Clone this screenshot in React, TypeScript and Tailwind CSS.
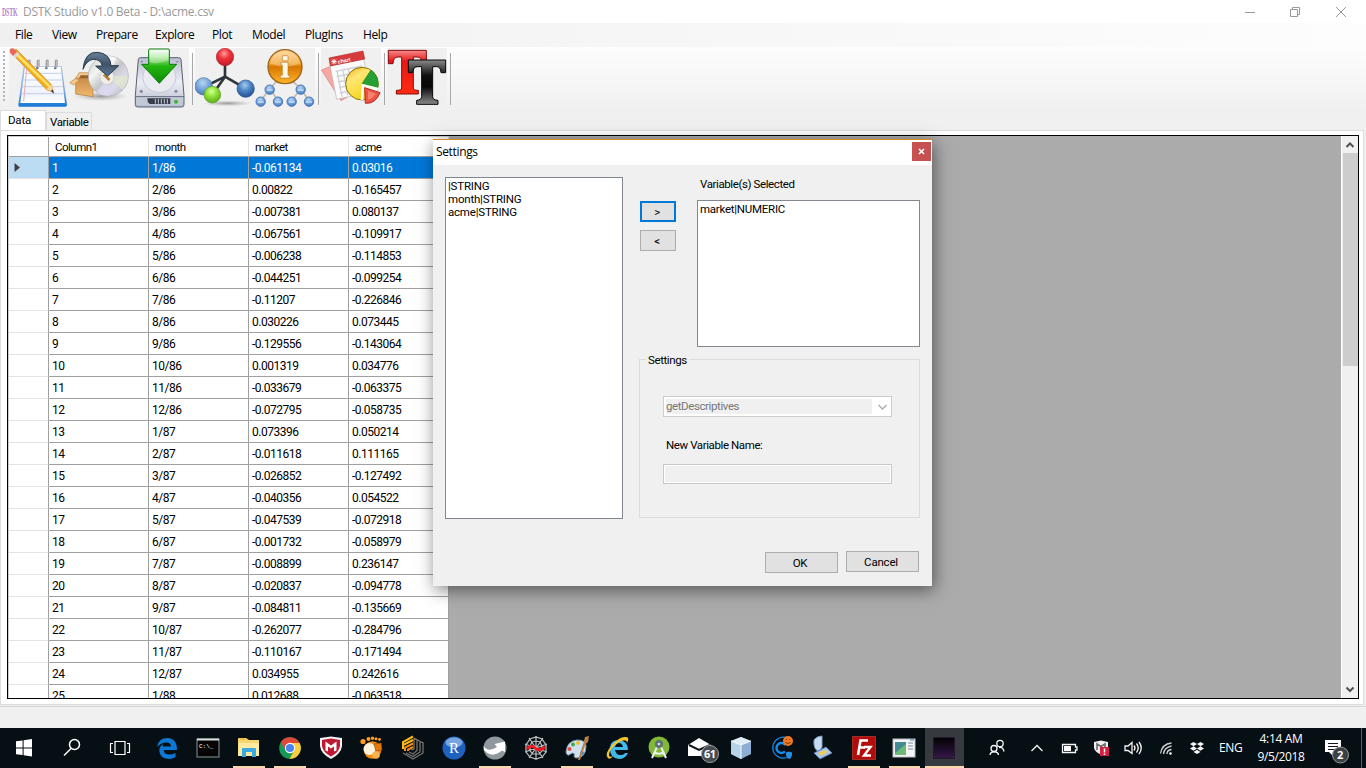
import React from "react";

const rows: [string, string, string][] = [
  ["1/86", "-0.061134", "0.03016"],
  ["2/86", "0.00822", "-0.165457"],
  ["3/86", "-0.007381", "0.080137"],
  ["4/86", "-0.067561", "-0.109917"],
  ["5/86", "-0.006238", "-0.114853"],
  ["6/86", "-0.044251", "-0.099254"],
  ["7/86", "-0.11207", "-0.226846"],
  ["8/86", "0.030226", "0.073445"],
  ["9/86", "-0.129556", "-0.143064"],
  ["10/86", "0.001319", "0.034776"],
  ["11/86", "-0.033679", "-0.063375"],
  ["12/86", "-0.072795", "-0.058735"],
  ["1/87", "0.073396", "0.050214"],
  ["2/87", "-0.011618", "0.111165"],
  ["3/87", "-0.026852", "-0.127492"],
  ["4/87", "-0.040356", "0.054522"],
  ["5/87", "-0.047539", "-0.072918"],
  ["6/87", "-0.001732", "-0.058979"],
  ["7/87", "-0.008899", "0.236147"],
  ["8/87", "-0.020837", "-0.094778"],
  ["9/87", "-0.084811", "-0.135669"],
  ["10/87", "-0.262077", "-0.284796"],
  ["11/87", "-0.110167", "-0.171494"],
  ["12/87", "0.034955", "0.242616"],
  ["1/88", "0.012688", "-0.063518"],
];

const menu: [string, string][] = [
  ["File", "w-[37px]"],
  ["View", "w-[44px]"],
  ["Prepare", "w-[59px]"],
  ["Explore", "w-[57px]"],
  ["Plot", "w-[40px]"],
  ["Model", "w-[53px]"],
  ["PlugIns", "w-[58px]"],
  ["Help", "w-[40px]"],
];

/* ---------- shared gradients ---------- */

function Gradients() {
  return (
    <svg width="0" height="0" className="absolute">
      <defs>
        <linearGradient id="pad" x1="0" y1="0" x2="0" y2="1">
          <stop offset="0" stopColor="#ffffff" />
          <stop offset="0.75" stopColor="#eef2fb" />
          <stop offset="1" stopColor="#ffffff" />
        </linearGradient>
        <linearGradient id="padEdge" x1="0" y1="0" x2="0" y2="1">
          <stop offset="0" stopColor="#a9c1e2" />
          <stop offset="0.6" stopColor="#7fa9de" />
          <stop offset="1" stopColor="#1478d8" />
        </linearGradient>
        <linearGradient id="boxFill" x1="0" y1="0" x2="0" y2="1">
          <stop offset="0" stopColor="#c98c4a" />
          <stop offset="1" stopColor="#f0b96e" />
        </linearGradient>
        <linearGradient id="disc" x1="0" y1="0" x2="1" y2="1">
          <stop offset="0" stopColor="#c6c9cc" />
          <stop offset="0.3" stopColor="#f5f5f2" />
          <stop offset="0.5" stopColor="#c4c6c8" />
          <stop offset="0.7" stopColor="#dcdcec" />
          <stop offset="1" stopColor="#aeb2b6" />
        </linearGradient>
        <linearGradient id="steel" x1="0" y1="0" x2="0" y2="1">
          <stop offset="0" stopColor="#6d8198" />
          <stop offset="0.5" stopColor="#3f5369" />
          <stop offset="1" stopColor="#5c7895" />
        </linearGradient>
        <linearGradient id="drive" x1="0" y1="0" x2="0" y2="1">
          <stop offset="0" stopColor="#b9bfd0" />
          <stop offset="0.5" stopColor="#eceef5" />
          <stop offset="1" stopColor="#b4bacb" />
        </linearGradient>
        <linearGradient id="green" x1="0" y1="0" x2="0" y2="1">
          <stop offset="0" stopColor="#ffffff" />
          <stop offset="0.25" stopColor="#a4e894" />
          <stop offset="0.5" stopColor="#22b50e" />
          <stop offset="1" stopColor="#0b8a06" />
        </linearGradient>
        <radialGradient id="red" cx="0.45" cy="0.3" r="0.65">
          <stop offset="0" stopColor="#ff9a9a" />
          <stop offset="0.5" stopColor="#ee3038" />
          <stop offset="1" stopColor="#c81f2c" />
        </radialGradient>
        <radialGradient id="blue" cx="0.45" cy="0.3" r="0.65">
          <stop offset="0" stopColor="#a9cbef" />
          <stop offset="0.5" stopColor="#4e86c6" />
          <stop offset="1" stopColor="#28579a" />
        </radialGradient>
        <radialGradient id="paleBlue" cx="0.45" cy="0.3" r="0.65">
          <stop offset="0" stopColor="#b9d6f2" />
          <stop offset="0.6" stopColor="#74a3da" />
          <stop offset="1" stopColor="#4b7fbe" />
        </radialGradient>
        <radialGradient id="lime" cx="0.45" cy="0.3" r="0.65">
          <stop offset="0" stopColor="#d4ff9a" />
          <stop offset="0.5" stopColor="#8fe238" />
          <stop offset="1" stopColor="#62b41c" />
        </radialGradient>
        <linearGradient id="amber" x1="0" y1="0" x2="0" y2="1">
          <stop offset="0" stopColor="#ffd28a" />
          <stop offset="0.42" stopColor="#f0a02c" />
          <stop offset="0.5" stopColor="#d87600" />
          <stop offset="1" stopColor="#ffb42c" />
        </linearGradient>
        <radialGradient id="shade">
          <stop offset="0" stopColor="#777" stopOpacity="0.7" />
          <stop offset="1" stopColor="#999" stopOpacity="0" />
        </radialGradient>
        <linearGradient id="pie" x1="0" y1="0" x2="0.6" y2="1">
          <stop offset="0" stopColor="#f2a91c" />
          <stop offset="0.35" stopColor="#ffe774" />
          <stop offset="1" stopColor="#f4d514" />
        </linearGradient>
        <linearGradient id="redT" x1="0" y1="0" x2="0" y2="1">
          <stop offset="0" stopColor="#f58a8a" />
          <stop offset="0.25" stopColor="#e81818" />
          <stop offset="1" stopColor="#ff2a10" />
        </linearGradient>
        <linearGradient id="blackT" x1="0" y1="0" x2="0" y2="1">
          <stop offset="0" stopColor="#8a8a8a" />
          <stop offset="0.35" stopColor="#101010" />
          <stop offset="0.6" stopColor="#050505" />
          <stop offset="1" stopColor="#8b8b8b" />
        </linearGradient>
        <linearGradient id="purple" x1="0" y1="0" x2="0" y2="1">
          <stop offset="0" stopColor="#020103" />
          <stop offset="1" stopColor="#351848" />
        </linearGradient>
      </defs>
    </svg>
  );
}

/* ---------- toolbar drawings, 180 units for 60px ---------- */

function ToolIcon({ children }: { children: React.ReactNode }) {
  return (
    <button className="h-[60px] w-[60px] shrink-0 bg-[#f0f0f0]">
      <svg width="60" height="60" viewBox="0 0 180 180">
        {children}
      </svg>
    </button>
  );
}

function NotepadIcon() {
  return (
    <ToolIcon>
      <path d="M44 54H158L174 170Q174 176 168 176H33Q27 176 28 170Z" fill="url(#padEdge)" />
      <path d="M48 56H155L168 165H34Z" fill="url(#pad)" />
      <path d="M47 76H157M44 96H160M41 116H162M38 137H164" stroke="#c3cfe8" strokeWidth="3" />
      <path d="M53 60L44 160" stroke="#f3a9b3" strokeWidth="3" />
      {[58, 85, 112, 139].map((x) => (
        <g key={x}>
          <circle cx={x} cy="60" r="4" fill="#5b6f8d" />
          <path d={`M${x} 59V41q0-6 5-4V56`} stroke="#a0a0a4" strokeWidth="4" fill="none" />
        </g>
      ))}
      <path d="M6 14L22 4L128 111L134 134L113 125Z" fill="#f2ad1c" stroke="#bd7415" strokeWidth="1.5" />
      <path d="M18 8L125 113L119 118L11 13Z" fill="#ffe068" />
      <path d="M2 6Q6-2 16 3L25 12L12 24L3 14Z" fill="#e66a55" />
      <path d="M12 24L25 12L31 18L18 31Z" fill="#d9dade" />
      <path d="M112 123L128 110L135 135Z" fill="#f4d5a4" />
      <path d="M126 129L131 124L135 137Z" fill="#333" />
    </ToolIcon>
  );
}

function DiscIcon() {
  return (
    <ToolIcon>
      <ellipse cx="95" cy="145" rx="82" ry="14" fill="url(#shade)" />
      <path d="M20 90L72 92V146L20 138Z" fill="url(#boxFill)" stroke="#b5762c" strokeWidth="2" />
      <path d="M20 91L2 104L14 111L30 96ZM20 91L30 74H75L72 91Z" fill="#f3c68a" stroke="#c08a46" strokeWidth="2" />
      <path d="M35 82H68V91H30Z" fill="#95612c" />
      <circle cx="118" cy="84" r="60" fill="url(#disc)" stroke="#aaaeb3" strokeWidth="2" />
      <path d="M118 84L92 29Q118 19 143 30Z" fill="#fff" opacity="0.6" />
      <path d="M118 84L84 134Q102 145 120 143Z" fill="#dcd8f2" opacity="0.8" />
      <path d="M118 84L178 84Q176 108 160 125Z" fill="#e2eacb" opacity="0.7" />
      <circle cx="114" cy="88" r="21" fill="#eeeeec" stroke="#c9c9c9" strokeWidth="2" />
      <path d="M101 82L119 99L124 93L110 77Z" fill="#b38135" />
      <path d="M42 64Q47 10 86 13Q124 17 126 53H149L116 84L80 54H100Q94 32 72 34Q51 38 42 64Z" fill="url(#steel)" stroke="#283a4d" strokeWidth="3" />
    </ToolIcon>
  );
}

function DriveIcon() {
  return (
    <ToolIcon>
      <path d="M28 34Q29 29 34 29H149Q155 29 156 34L165 143V170Q165 177 158 177H26Q19 177 19 170V143Z" fill="url(#drive)" stroke="#5a6072" strokeWidth="3" />
      <ellipse cx="91" cy="88" rx="50" ry="45" fill="#e9ebf1" stroke="#c6cad6" strokeWidth="3" />
      <path d="M19 146H165" stroke="#60677c" strokeWidth="3" />
      <rect x="24" y="149" width="136" height="22" rx="3" fill="#c3c8d6" />
      <path d="M55 151H124V168H63Q55 166 55 151Z" fill="#373d4b" />
      <path d="M79 153V167M88 153V167M97 153V167M106 153V167M115 153V167" stroke="#c8ccd8" strokeWidth="3" />
      <circle cx="141" cy="161" r="6" fill="#35b82d" />
      <g fill="#858ca2">
        <circle cx="38" cy="41" r="3" /><circle cx="145" cy="41" r="3" />
        <circle cx="37" cy="130" r="5" /><circle cx="141" cy="130" r="5" />
      </g>
      <path d="M59 6Q59 3 63 3H117Q121 3 121 6V49H143L91 106L38 49H59Z" fill="url(#green)" stroke="#087a08" strokeWidth="3" />
      <path d="M62 6H118V36Q88 51 62 43Z" fill="#fff" opacity="0.3" />
    </ToolIcon>
  );
}

function MoleculeIcon() {
  return (
    <ToolIcon>
      <ellipse cx="98" cy="166" rx="75" ry="9" fill="url(#shade)" />
      <path d="M90 44V88M90 86L27 117M90 86L52 140M90 86L151 121" stroke="#30353a" strokeWidth="8" />
      <circle cx="90" cy="27" r="26" fill="url(#red)" stroke="#b32733" strokeWidth="2" />
      <circle cx="26" cy="115" r="26" fill="url(#paleBlue)" stroke="#4270a7" strokeWidth="2" />
      <circle cx="52" cy="140" r="25" fill="url(#lime)" stroke="#579c25" strokeWidth="2" />
      <circle cx="152" cy="122" r="26" fill="url(#blue)" stroke="#254e88" strokeWidth="2" />
    </ToolIcon>
  );
}

function InfoIcon() {
  return (
    <ToolIcon>
      <path d="M67 97L45 122L17 158M45 122L69 158M110 97L137 122L110 158M137 122L162 158" stroke="#c0b9b0" strokeWidth="5" fill="none" />
      {[[44, 125], [137, 125], [17, 161], [69, 161], [110, 161], [162, 161]].map(([x, y]) => (
        <g key={`${x}-${y}`}>
          <circle cx={x} cy={y} r="14" fill="url(#paleBlue)" stroke="#4a77b8" strokeWidth="3" />
          <path d={`M${x - 9} ${y + 1}h18`} stroke="#cfe2f8" strokeWidth="4" fill="none" />
        </g>
      ))}
      <circle cx="90" cy="56" r="51" fill="url(#amber)" stroke="#9a641b" strokeWidth="4" />
      <path d="M45 46Q54 12 90 10Q126 12 135 46Q92 67 45 46Z" fill="#fff" opacity="0.25" />
      <rect x="82" y="23" width="17" height="15" rx="2" fill="#fff8e6" stroke="#bd7b25" strokeWidth="2" />
      <path d="M78 43H99V82H104V90H76V82H82V51H78Z" fill="#fff8e6" stroke="#bd7b25" strokeWidth="2" />
    </ToolIcon>
  );
}

function ChartIcon() {
  return (
    <ToolIcon>
      <path d="M1 66L38 51L80 147L60 158Z" fill="#f6a7a4" stroke="#d98684" strokeWidth="2" />
      <path d="M27 53L128 33L147 132L47 154Z" fill="#fafafa" stroke="#b8b8b8" strokeWidth="2" />
      <path d="M24 30L126 9L131 33L28 54Z" fill="#d63c3c" stroke="#b52c30" strokeWidth="2" />
      <path d="M31 41h16M39 33v16M33 35l12 12M45 35l-12 12" stroke="#fff" strokeWidth="3" />
      <text x="51" y="47" transform="rotate(-11 51 47)" fill="#fff" fontSize="16" fontWeight="bold" className="font-['Liberation_Sans']">chart</text>
      <path d="M44 70L124 54M47 86L100 75M51 102L91 94M54 119L91 111M57 135L97 127M48 68L63 146M65 64L80 142M82 61L90 101M99 57L102 73" stroke="#cdd1d7" strokeWidth="4" />
      <circle cx="123" cy="107" r="49" fill="url(#pie)" stroke="#8c7300" strokeWidth="3" />
      <path d="M123 107L150 66Q174 84 171 119Z" fill="#24a034" stroke="#198021" strokeWidth="2" />
      <path d="M123 107L172 119L166 135L129 118Q127 139 127 156L119 157Z" fill="#fffdf0" />
      <path d="M131 119L177 134Q164 168 133 166Z" fill="#ee5547" stroke="#b5271d" strokeWidth="3" />
      <path d="M141 129L164 137Q155 151 141 155Z" fill="#ffa28d" opacity="0.6" />
    </ToolIcon>
  );
}

function TypeIcon() {
  return (
    <ToolIcon>
      <path d="M4 7H118V47H104Q104 26 90 27H79V120Q79 127 94 127V138H28V127Q44 127 44 120V27H34Q19 26 18 47H4Z" fill="url(#redT)" stroke="#820d0d" strokeWidth="3" />
      <path d="M64 36H176V74H162Q161 55 148 56H137V146Q137 156 153 157V169H89V157Q103 156 104 146V56H93Q78 55 77 74H64Z" fill="url(#blackT)" stroke="#080808" strokeWidth="3" />
    </ToolIcon>
  );
}

function Sep() {
  return (
    <div className="flex h-[60px] w-[6px] shrink-0 justify-center">
      <div className="mt-[5px] h-[52px] w-px bg-[#a8a8a8]" />
    </div>
  );
}

/* ---------- taskbar drawings, 26 units ---------- */

function Task({
  children,
  width = "w-[41px]",
  line = "",
  active = false,
}: {
  children: React.ReactNode;
  width?: string;
  line?: string;
  active?: boolean;
}) {
  return (
    <button className={`flex h-10 shrink-0 flex-col items-center ${width} ${active ? "bg-[#363a3e]" : ""}`}>
      <span className="flex h-[38px] items-center pt-[2px]">
        <svg width="26" height="26" viewBox="0 0 26 26" className="overflow-visible">
          {children}
        </svg>
      </span>
      {line && <span className={`h-[2px] bg-[#f9d6ac] ${line}`} />}
    </button>
  );
}

function TaskIcons() {
  return (
    <>
      <Task width="w-12">
        <path d="M5 6.2L11.6 5.4V12.5H5ZM12.6 5.2L21 4V12.5H12.6ZM5 13.5H11.6V20L5 19.2ZM12.6 13.5H21V21.5L12.6 20.3Z" fill="#fff" />
      </Task>
      <Task width="w-12">
        <circle cx="15.5" cy="9.5" r="5" fill="none" stroke="#fff" strokeWidth="1.5" />
        <path d="M12 13.5L5 20.5" stroke="#fff" strokeWidth="1.5" />
      </Task>
      <Task width="w-12">
        <path d="M8 6.5H18V19.500H8ZM6 8.500H3.500V17.500H6M20 8.500H22.500V17.500H20" fill="none" stroke="#fff" strokeWidth="1.200" />
      </Task>
      <div className="w-[2px] shrink-0" />
      <Task>
        <path d="M3 12Q4.500 3 13.500 3Q23 3.500 23 15H9.700Q10 19.500 15.500 19.500Q19 19.500 21.500 18V22Q18.500 24 14.500 24Q6 23.500 5.300 16Q5 11 10 8.700Q8.500 10 8.600 11.500H17Q16.800 7.500 12.800 7.400Q6.500 7.500 3 12Z" fill="#0a78d4" />
      </Task>
      <Task>
        <rect x="2" y="4" width="22" height="18" fill="#050505" stroke="#8f9698" />
        <path d="M2 4.500H24" stroke="#d8dcdd" strokeWidth="2" />
        <text x="4" y="12.500" fill="#fff" fontSize="6" className="font-['Liberation_Mono']">C:\_</text>
      </Task>
      <Task line="w-8">
        <path d="M2 4Q2 3 3 3H10L13 5H23V21H2Z" fill="#f5d571" />
        <path d="M3 8H23V21H2Z" fill="#ffeaa1" />
        <path d="M4 4H9" stroke="#e7aa1a" />
        <path d="M6 22V14Q6 13 7 13H19Q20 13 20 14V22H16V17H10V22Z" fill="#39a9e2" />
      </Task>
      <Task line="w-8">
        <circle cx="13" cy="13" r="10.800" fill="#159957" />
        <path d="M13 8H22.600A10.800 10.800 0 0 1 12.500 23.800L17.500 15Z" fill="#fbcd3c" />
        <path d="M3.800 7.400A10.800 10.800 0 0 1 22.500 8H13A5 5 0 0 0 8.200 14.500Z" fill="#df473b" />
        <circle cx="13" cy="13" r="5.200" fill="#fff" />
        <circle cx="13" cy="13" r="4.100" fill="#4b84ed" />
      </Task>
      <Task>
        <path d="M2 3L13 1.500L24 3V11Q23 19 13 24Q3 19 2 11Z" fill="#f4f4f4" />
        <path d="M4 5L13 3.500L22 5V11Q21 17.500 13 21.500Q5 17.500 4 11Z" fill="#bf1832" />
        <path d="M7.500 15.500V6.500L13 10.500L18.500 6.500V15.500L16 16.500V11.500L13 13.500L10 11.500V16.500Z" fill="#fff" />
      </Task>
      <Task>
        <circle cx="13.500" cy="15" r="8.800" fill="#f28b19" />
        <circle cx="10.500" cy="14" r="6" fill="#fff3dc" />
        <path d="M15 9L22 8L23 15L17 16Z" fill="#e8790b" stroke="#8c501b" strokeWidth=".7" />
        <circle cx="17" cy="20" r="3.800" fill="#f8b34d" />
        <g fill="#ff9d25"><circle cx="4" cy="6.500" r="2.600" /><circle cx="9.500" cy="4" r="2" /><circle cx="13.500" cy="3.200" r="1.700" /><circle cx="17" cy="3.700" r="1.500" /><circle cx="20.500" cy="4.500" r="1.400" /></g>
      </Task>
      <Task>
        <g fill="none" strokeWidth="1.700">
          <path d="M3 18L13 24L23 18V7M6 18L13 21.500L20 17V6M9 17L13 19L17 15.500V5M11 15L14 14V3M14 3L23 8" stroke="#77736e" strokeWidth="1.300" />
          <path d="M3 11V7L13 1.500M3 14V10L13 5" stroke="#ffbb12" strokeWidth="2" />
          <path d="M5 16V12.500L13 8.500M8 16V14.500L13 12" stroke="#f08b12" strokeWidth="2" />
        </g>
      </Task>
      <Task>
        <circle cx="13" cy="13" r="11.500" fill="#1f62bd" />
        <ellipse cx="13" cy="7.500" rx="8.500" ry="5" fill="#a6c9f2" opacity=".65" />
        <text x="8" y="18" fill="#fff" fontSize="15" className="font-['Liberation_Serif']">R</text>
      </Task>
      <Task line="w-8">
        <circle cx="13" cy="13" r="11.500" fill="#8f989c" />
        <path d="M1.700 11Q6 18 15 12L12.500 9L23 6.500V17L20 15.500Q10 24 2 15Z" fill="#fff" />
      </Task>
      <Task>
        <path d="M13 1V25M2 9L24 17M2 17L24 9M6 3L20 23M20 3L6 23M7 4L13 2L19 4L23 10V17L19 22L13 24L7 22L3 17V10ZM9 7L13 6L17 7L19 11V16L16 19H10L7 16V11Z" fill="none" stroke="#bfc2c3" strokeWidth="1.200" />
        <path d="M4 14Q8 9 12 13T22 12" fill="none" stroke="#ed1c24" strokeWidth="3" />
      </Task>
      <Task line="w-8">
        <path d="M2 17Q3 6 13 5Q22 5 22 11Q22 22 13 23Q9 23 10.500 19Q9 17 6.500 19Q3 22 2 17Z" fill="#cfe1ef" stroke="#809bae" />
        <circle cx="5.500" cy="14" r="2" fill="#e34e3e" /><circle cx="9" cy="9.500" r="2" fill="#43a84e" /><circle cx="14" cy="8" r="2" fill="#f0be2c" /><circle cx="18" cy="18" r="2" fill="#368ada" />
        <path d="M14 25L19.500 8L21 2L25 1L24 7L21.500 9L16 25Z" fill="#b98048" />
      </Task>
      <Task>
        <path d="M5 12Q6 5 14 5Q23 6 23 15H10Q11 20 15 20Q19 20 20 18H23Q20 24 14 24Q5 23 5 14ZM10 12H18Q17 8 14 8Q11 8 10 12Z" fill="#42b9ed" />
        <path d="M3 23Q-1 19 7 10T21 2Q25 2 22 8Q22 3 14 7Q4 14 4 20Q4 23 8 21Q5 25 3 23Z" fill="#f6c52e" />
      </Task>
      <Task>
        <circle cx="13" cy="12" r="10.500" fill="#81b936" />
        <path d="M11.500 11L6 23M14.500 11L20 23M8 17.500Q13 20 18 17.500" fill="none" stroke="#eceff0" strokeWidth="2" />
        <circle cx="13" cy="9" r="4" fill="#607078" />
        <circle cx="13" cy="9" r="1.300" fill="#dce3e6" />
      </Task>
      <Task>
        <path d="M1 10L12 3L24 10V21H1Z" fill="#fff" />
        <path d="M2 10L12 15L23 10" fill="none" stroke="#10181c" strokeWidth="2" />
        <circle cx="23" cy="19" r="8.500" fill="#454b50" stroke="#9ba0a3" />
        <text x="17" y="23" fill="#fff" fontSize="11" fontWeight="bold" className="font-['Open_Sans'] tracking-[-0.5px]">61</text>
      </Task>
      <Task>
        <path d="M3 6L13 2L23 6V19L13 24L3 19Z" fill="#8caed2" />
        <path d="M3 6L13 10V24L3 19Z" fill="#b6d2e8" /><path d="M3 6L13 2L23 6L13 10Z" fill="#e0ebf4" />
        <path d="M3 6L13 10L23 6M13 10V24" stroke="#f3f9ff" fill="none" />
      </Task>
      <Task>
        <path d="M17 2.500A10.500 10.500 0 1 0 18 22.500" fill="none" stroke="#1589e9" strokeWidth="1.300" />
        <path d="M16.500 10A5 5 0 1 0 16 16.500" fill="none" stroke="#168df0" strokeWidth="2.400" />
        <circle cx="19" cy="6" r="5" fill="#f27921" /><path d="M16.500 7.500Q19 9.500 21.500 7.500M17 4.500h1M20 4.500h1" stroke="#713800" fill="none" />
        <path d="M17 17.500L20 16.500L23 17.500V20Q22.500 23 20 24Q17.500 23 17 20Z" fill="#248fe5" />
      </Task>
      <Task>
        <path d="M4 5Q7 1 12 1L12 12L9 17Q3 14 4 5Z" fill="#c6dcf4" stroke="#7e9fbe" />
        <path d="M4 18L16 12L22 18L10 24Z" fill="#a7c5ed" stroke="#547ca6" />
        <path d="M8 18L15 15L18 17L11 21Z" fill="#edcd5a" />
      </Task>
      <Task line="w-8">
        <rect x="1.500" y="1.500" width="23" height="23" fill="#b40b0b" stroke="#ec4c42" strokeDasharray="1 1" />
        <path d="M7 20L9.500 5.500H17M8 12.500H14" fill="none" stroke="#fff" strokeWidth="2.600" /><path d="M13 12H19.500L13 20.500H20" fill="none" stroke="#fff" strokeWidth="2.400" />
      </Task>
      <Task line="w-[31px]">
        <g transform="translate(-1 0)">
          <rect x="2" y="4" width="22" height="18" fill="#f5f5f5" stroke="#b8bec2" />
          <rect x="4" y="7" width="11" height="13" fill="#438b93" /><path d="M4 18L15 9V20H4Z" fill="#6eb878" />
          <path d="M17 8H22M17 11H22M17 14H22" stroke="#788b97" /><path d="M19 5H23" stroke="#4285c7" />
        </g>
      </Task>
      <Task width="w-[39px]" line="w-[39px]" active>
        <rect x="1.500" y="2.500" width="21" height="21" fill="url(#purple)" stroke="#24182d" />
      </Task>
    </>
  );
}

function Tray() {
  return (
    <div className="flex h-10 flex-1 items-center text-white">
      <svg width="246" height="40" viewBox="964 728 246 40" className="shrink-0">
        <g fill="none" stroke="#f4f6f7" strokeWidth="1.300">
          <circle cx="994" cy="748.500" r="3" /><path d="M990 755Q990.500 751.500 994 752Q998 751.500 998.500 755" />
          <circle cx="1000" cy="743.500" r="3.200" /><path d="M999 747.500Q1003 746.500 1004 751.500" />
          <path d="M1031.500 751L1037 745.500L1042.500 751" />
          <path d="M1062.500 744.500H1075.500V747H1077V750H1075.500V752.500H1062.500Z" />
          <path d="M1125 746H1128L1132 742.500V753.500L1128 750.500H1125ZM1134 745.500Q1136 748 1134 750.500M1136.500 743.500Q1140 748 1136.500 752.500M1139 742Q1143.500 748 1139 754" />
          <path d="M1160.500 753.500Q1162 744 1171.500 743M1163.500 754Q1164 747.500 1171.500 746M1167 754Q1167 750 1171.500 749.500" stroke="#cfd2d4" />
        </g>
        <rect x="1064" y="746" width="7" height="5" fill="#fff" />
        <circle cx="1170.500" cy="753.500" r="1.300" fill="#fff" />
        <path d="M1094 742L1101 740.500L1108 742V748Q1107 752 1101 754.500Q1095 752 1094 748Z" fill="#eee" />
        <path d="M1097 750V744L1101 746.500L1105 744V750" stroke="#69696b" strokeWidth="1.600" fill="none" />
        <rect x="1100" y="747" width="9" height="9" fill="#d01f43" /><path d="M1104.500 748.500V752.500M1104.500 753.500V755" stroke="#fff" strokeWidth="1.500" />
        <path d="M1190 744L1193.500 742L1197 744L1193.500 746.300ZM1197 744L1200.500 742L1204 744L1200.500 746.300ZM1190 748.500L1193.500 746.300L1197 748.500L1193.500 750.700ZM1197 748.500L1200.500 746.300L1204 748.500L1200.500 750.700ZM1193.500 752L1197 749.800L1200.500 752L1197 754Z" fill="#f5f5f5" />
      </svg>
      <span className="w-[34px] shrink-0 pl-[9px] text-[12px] tracking-[-0.4px]">ENG</span>
      <div className="w-[74px] shrink-0 text-center text-[12px] leading-[18px] tracking-[-0.35px]">
        <div>4:14 AM</div>
        <div>9/5/2018</div>
      </div>
      <svg width="40" height="40" viewBox="1318 728 40 40" className="shrink-0">
        <path d="M1325 740H1341V752H1333V756L1329 752H1325Z" fill="#fff" />
        <path d="M1328 743.500H1338M1328 746.500H1338M1328 749.500H1335" stroke="#111a1d" />
        <circle cx="1340.500" cy="755" r="8" fill="#3b4145" stroke="#93989b" />
        <text x="1337" y="759" fill="#fff" fontSize="11" fontWeight="bold" className="font-['Open_Sans']">2</text>
      </svg>
      <div className="ml-[3px] h-10 w-px bg-[#5b6165]" />
    </div>
  );
}

/* ---------- settings dialog ---------- */

const cellText = "font-[Roboto,sans-serif] text-[12px] tracking-[-0.5px]";
const labelText = "font-[Roboto,sans-serif] text-[11.5px] tracking-[-0.4px]";

function Dialog() {
  return (
    <div className={`absolute left-[433px] top-[139px] flex h-[447px] w-[499px] flex-col border-t border-[#d98a22] bg-[#f0f0f0] shadow-[2px_4px_16px_rgba(0,0,0,0.5)] ${labelText}`}>
      <div className="flex h-[25px] shrink-0 justify-between bg-white pl-[3px] pr-px pt-[2px]">
        <span className="font-['Open_Sans',sans-serif] text-[12px] leading-[20px] tracking-[-0.35px]">Settings</span>
        <button className="flex h-[19px] w-[19px] items-center justify-center bg-[#c75050]">
          <svg width="7" height="7" viewBox="0 0 7 7"><path d="M1 1L6 6M6 1L1 6" stroke="#fff" strokeWidth="1.600" /></svg>
        </button>
      </div>
      <div className="flex h-[354px] shrink-0 pl-3 pr-3 pt-3">
        <div className="h-[342px] w-[178px] shrink-0 border border-[#828790] bg-white pl-[2px] pt-[2px] leading-[13px] tracking-[-0.2px]">
          <div>|STRING</div>
          <div>month|STRING</div>
          <div>acme|STRING</div>
        </div>
        <div className="ml-4 flex w-[281px] flex-col">
          <div className="flex h-[170px] shrink-0">
            <div className="ml-px mt-6 flex w-9 flex-col gap-2">
              <button className="h-[21px] border-2 border-[#0078d7] bg-[#e1e1e1] pr-[2px] leading-[18px]">&gt;</button>
              <button className="h-[21px] border border-[#adadad] bg-[#e1e1e1] pr-[2px] leading-[20px]">&lt;</button>
            </div>
            <div className="ml-[21px] w-[223px]">
              <div className="h-[23px] pl-[3px] leading-[15px]">Variable(s) Selected</div>
              <div className="h-[147px] border border-[#828790] bg-white pl-[2px] pt-[2px] leading-[13px] tracking-[-0.25px]">market|NUMERIC</div>
            </div>
          </div>
          <div className="mt-[12px] h-[159px] w-[281px] shrink-0 border border-[#dcdcdc]">
            <div className="-mt-2 ml-[6px] h-[16px] w-[43px] bg-[#f0f0f0] pl-[2px] leading-[17px]">Settings</div>
            <div className="ml-[23px] mt-[28px] flex h-[21px] w-[229px] border border-[#cccccc] bg-white p-[2px]">
              <div className="h-[15px] w-[206px] bg-[#f0f0f0] leading-[15px] text-[#777]">getDescriptives</div>
              <svg width="17" height="15" viewBox="0 0 17 15"><path d="M6.500 6L10.500 10L14.500 6" fill="none" stroke="#aaa" strokeWidth="1.300" /></svg>
            </div>
            <div className="ml-[26px] mt-[20px] h-[16px] leading-[16px]">New Variable Name:</div>
            <div className="ml-[23px] mt-[11px] h-[20px] w-[229px] border border-[#c8c8c8] bg-[#f0f0f0] shadow-[inset_0_0_0_1px_#fff]" />
          </div>
        </div>
      </div>
      <div className="flex gap-2 pl-[332px] pt-[32px]">
        <button className="mt-px h-[21px] w-[73px] border border-[#adadad] bg-[#e1e1e1] pr-[3px] leading-[20px]">OK</button>
        <button className="h-[21px] w-[73px] border border-[#adadad] bg-[#e1e1e1] pr-[3px] leading-[20px] tracking-[-0.2px]">Cancel</button>
      </div>
    </div>
  );
}

function DataGrid() {
  const cell = "w-[100px] shrink-0 border-b border-r border-[#a0a0a0] pl-[3px]";
  const head = "w-[100px] shrink-0 border-b border-r border-b-[#a0a0a0] border-r-[#e3e3e3] pl-[6px] text-[11.5px] tracking-[-0.5px]";
  return (
    <div className={`flex h-[564px] w-[1352px] shrink-0 overflow-hidden border border-black bg-[#ababab] ${cellText}`}>
      <div className="w-[441px] shrink-0 border-l border-[#ccc]">
        <div className="flex h-[21px] border-t border-[#ccc] bg-white leading-[20px]">
          <div className="w-10 shrink-0 border-b border-r border-[#a0a0a0]" />
          {["Column1", "month", "market", "acme"].map((h) => (
            <div key={h} className={head}>{h}</div>
          ))}
        </div>
        {rows.map((r, i) => (
          <div key={i} className="flex h-[22px] bg-white leading-[22px]">
            <div className={`flex w-10 shrink-0 items-center border-b border-r border-b-[#e3e3e3] border-r-[#a0a0a0] pl-[5px] ${i === 0 ? "bg-[#bcdcf4]" : ""}`}>
              {i === 0 && (
                <svg width="7" height="11" viewBox="0 0 7 11"><path d="M0.500 1L6 5.500L0.500 10Z" fill="#404040" /></svg>
              )}
            </div>
            {[String(i + 1), ...r].map((v, j) => (
              <div key={j} className={`${cell} ${i === 0 ? "bg-[#0078d7] text-white" : ""}`}>{v}</div>
            ))}
          </div>
        ))}
      </div>
      <div className="flex-1" />
      <div className="flex w-[17px] shrink-0 flex-col items-center border-l border-white bg-[#f0f0f0]">
        <svg width="16" height="17" viewBox="0 0 16 17" className="shrink-0"><path d="M4.500 11L8 7.500L11.500 11" fill="none" stroke="#505050" strokeWidth="2" /></svg>
        <div className="h-[213px] w-[15px] shrink-0 bg-[#cdcdcd]" />
        <div className="flex-1" />
        <svg width="16" height="17" viewBox="0 0 16 17" className="shrink-0"><path d="M4.500 6.500L8 10L11.500 6.500" fill="none" stroke="#505050" strokeWidth="2" /></svg>
      </div>
    </div>
  );
}

export default function App() {
  return (
    <div className="relative flex h-[768px] w-[1366px] flex-col overflow-hidden bg-[#f0f0f0] font-['Open_Sans',sans-serif] text-black">
      <Gradients />
      <header className="flex h-[23px] shrink-0 items-center bg-white">
        <span className="w-[23px] pl-[2px] font-['Liberation_Serif'] text-[12px] font-bold leading-[20px] tracking-[-0.500px] text-[#b48ad2]"><span className="inline-block origin-left scale-x-[0.5]">DSTK</span></span>
        <span className="text-[12px] tracking-[-0.260px] text-[#999]">DSTK Studio v1.0 Beta - D:\acme.csv</span>
        <div className="flex-1" />
        <svg width="126" height="20" viewBox="1240 0 126 20" fill="none" stroke="#999">
          <path d="M1245 10.500H1255M1290.500 7.500H1297.500V14.500H1290.500ZM1292.500 7.500V5.500H1299.500V12.500H1297.500M1336 5L1346 15M1346 5L1336 15" />
        </svg>
      </header>
      <nav className="flex h-6 shrink-0 items-center bg-gradient-to-r from-[#f0f0f0] to-[#fdfdfd] pl-[15px] text-[12px] tracking-[-0.400px]">
        {menu.map(([name, w]) => (
          <span key={name} className={`shrink-0 whitespace-nowrap ${w}`}>{name}</span>
        ))}
      </nav>
      <div className="flex h-[63px] shrink-0 bg-gradient-to-b from-[#fdfdfd] via-[#f7f7f7] to-[#f0f0f0] pt-px">
        <div className="mt-[3px] flex w-[9px] shrink-0 flex-col gap-[2px] pl-[3px]">
          {Array.from({ length: 13 }, (_, i) => (
            <span key={i} className="h-[2px] w-[2px] shrink-0 bg-[#b4b4b4]" />
          ))}
        </div>
        <NotepadIcon />
        <DiscIcon />
        <DriveIcon />
        <Sep />
        <MoleculeIcon />
        <InfoIcon />
        <Sep />
        <ChartIcon />
        <Sep />
        <TypeIcon />
        <Sep />
      </div>
      <div className={`flex h-5 shrink-0 items-end ${labelText}`}>
        <div className="-mb-px h-[21px] w-[46px] border border-b-0 border-[#dcdcdc] bg-white pl-[7px] leading-[18px] tracking-[-0.2px]">Data</div>
        <div className="h-[18px] w-[46px] border border-b-0 border-[#dcdcdc] pl-[3px] leading-[19px]">Variable</div>
      </div>
      <main className="h-[575px] w-[1364px] shrink-0 border border-[#dcdcdc] bg-white pl-[6px] pt-1">
        <DataGrid />
      </main>
      <div className="mt-px h-[22px] shrink-0 border-t border-[#d7d7d7]" />
      <footer className="flex h-10 shrink-0 bg-[#060f14]">
        <TaskIcons />
        <Tray />
      </footer>
      <Dialog />
    </div>
  );
}
